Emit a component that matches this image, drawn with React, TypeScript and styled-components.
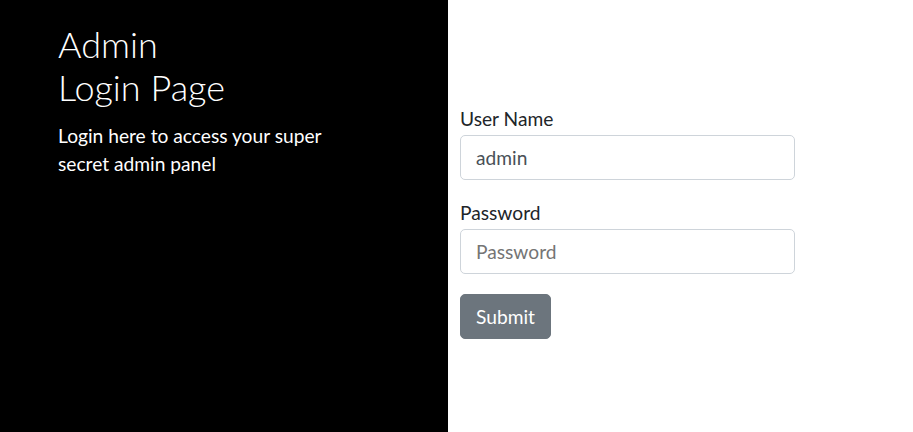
import * as React from "react";
import styled, { createGlobalStyle } from "styled-components";

const App: React.FC = () => {
  return (
    <>
      <GlobalStyle />
      <Page>
        <Sidebar>
          <Title>
            Admin
            <br />
            Login Page
          </Title>
          <Lead>Login here to access your super secret admin panel</Lead>
        </Sidebar>
        <Main>
          <Form onSubmit={(e) => e.preventDefault()}>
            <Group>
              <Label htmlFor="username">User Name</Label>
              <Input id="username" type="text" defaultValue="admin" />
            </Group>
            <Group>
              <Label htmlFor="password">Password</Label>
              <Input id="password" type="password" placeholder="Password" />
            </Group>
            <Button type="submit">Submit</Button>
          </Form>
        </Main>
      </Page>
    </>
  );
};

//Styled components

const GlobalStyle = createGlobalStyle`
  * {
    box-sizing: border-box;
  }
  body {
    margin: 0;
    font-family: Lato, "Open Sans", sans-serif;
    font-size: 19.2px;
    color: #212529;
    background: #fff;
  }
`;

const Page = styled.div`
  display: flex;
  min-height: 432px;
`;

const Sidebar = styled.aside`
  width: 448px;
  flex-shrink: 0;
  background: #000;
  color: #fff;
  padding: 23px 0 0 58px;
`;

const Title = styled.h1`
  margin: 0 0 13px;
  font-size: 36px;
  font-weight: 300;
  line-height: 1.2;
`;

const Lead = styled.p`
  margin: 0;
  width: 290px;
  font-size: 19.2px;
  line-height: 28px;
`;

const Main = styled.main`
  flex: 1;
  padding: 107px 0 0 12px;
`;

const Form = styled.form`
  width: 335px;
`;

const Group = styled.div`
  margin-bottom: 21px;

  & + button {
    margin-top: -1px;
  }
`;

const Label = styled.label`
  display: block;
  margin-bottom: 4px;
  font-size: 19.2px;
  line-height: 24px;
`;

const Input = styled.input`
  display: block;
  width: 100%;
  height: 45px;
  padding: 6px 15px;
  font-family: inherit;
  font-size: 19.2px;
  color: #495057;
  background: #fff;
  border: 1px solid #ced4da;
  border-radius: 5px;
  outline: none;

  ::placeholder {
    color: #6c757d;
  }
`;

const Button = styled.button`
  display: block;
  height: 45px;
  padding: 0 15px;
  font-family: inherit;
  font-size: 19.2px;
  color: #fff;
  background: #6c757d;
  border: 1px solid #6c757d;
  border-radius: 5px;
  cursor: pointer;
`;

export default App;
